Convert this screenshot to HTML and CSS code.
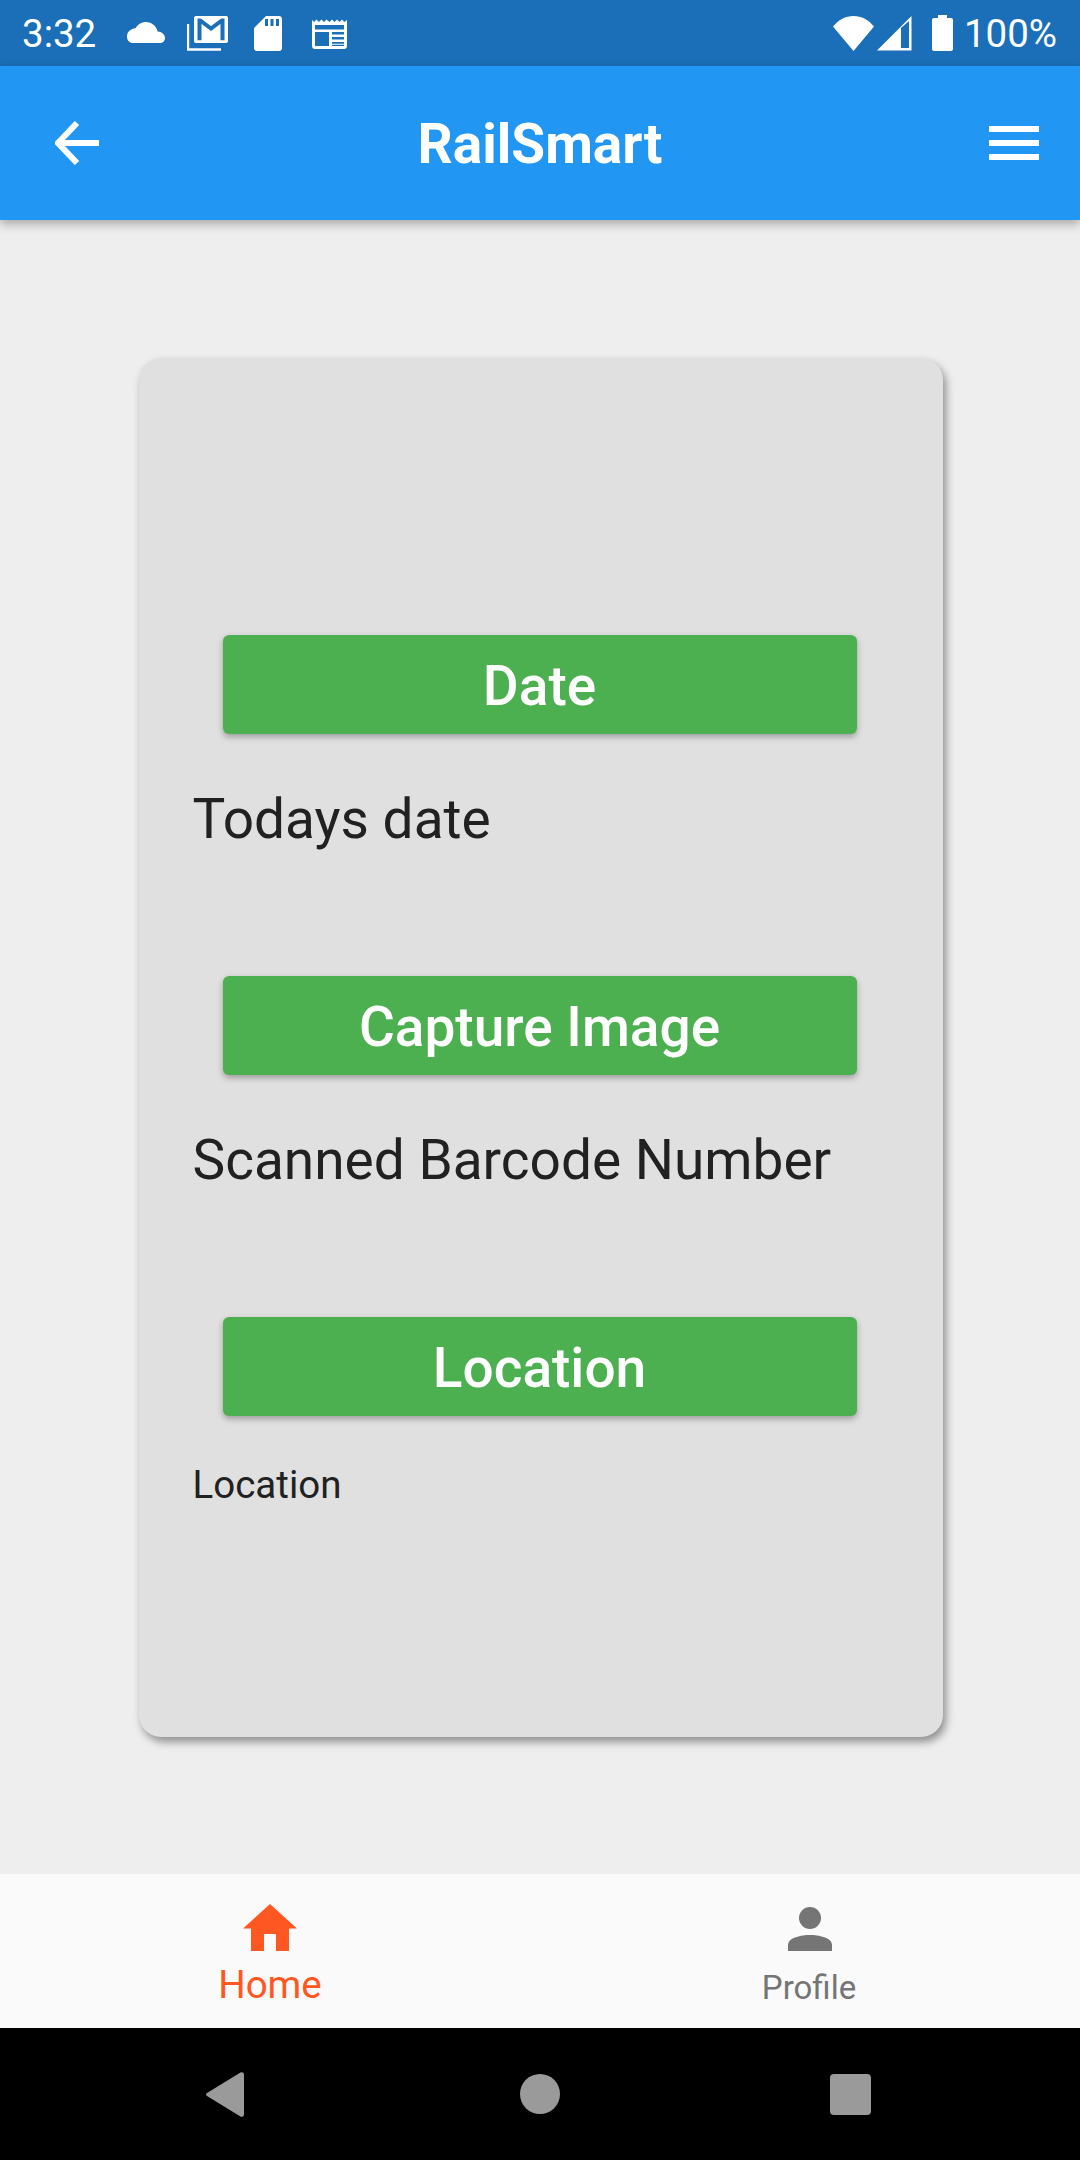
FILE: index.html
```html
<!DOCTYPE html>
<html lang="en">
<head>
<meta charset="UTF-8">
<meta name="viewport" content="width=device-width, initial-scale=1.0">
<title>RailSmart</title>
<link rel="stylesheet" href="styles.css">
</head>
<body>
<div class="screen">
    <div class="status-bar">
        <span class="status-time">3:32</span>
        <svg class="icon-cloud" viewBox="0 0 38 21"><path d="M30.6 9.5C29.5 4 24.6 0 19 0c-4.500 0-8.500 2.500-10.500 6.300C3.700 6.800 0 10 0 14.500 0 18.500 2.500 21 6 21h27c3 0 5-2.200 5-5 0-3.400-3.200-6.300-7.400-6.500z" fill="#fff"/></svg>
        <svg class="icon-mail" viewBox="0 0 41 35">
            <path d="M1 8v25.500h33" fill="none" stroke="#fff" stroke-width="2.400"/>
            <rect x="7" y="0" width="34" height="27" rx="2.500" fill="#fff"/>
            <path d="M12.500 24.500V4l11.500 8.500L35.500 4v20.500" fill="none" stroke="#1a6fb8" stroke-width="4"/>
            <rect x="8.200" y="1.200" width="31.600" height="24.600" rx="1.500" fill="none" stroke="#fff" stroke-width="2.400"/>
        </svg>
        <svg class="icon-sd" viewBox="0 0 28 35"><path d="M12 0h13c1.700 0 3 1.300 3 3v29c0 1.700-1.300 3-3 3H3c-1.700 0-3-1.300-3-3V12zM11 3v7h3V3zm5.500 0v7h3V3zM22 3v7h3V3z" fill="#fff" fill-rule="evenodd"/></svg>
        <svg class="icon-news" viewBox="0 0 35 31">
            <path d="M0 2l2 2 2.500-2.500L7 4l2.500-2.500L12 4l2.500-2.500L17.500 4l2.500-2.500L22.500 4 25 1.500 27.500 4 30 1.500 32.500 4 35 2v26c0 1.700-1.300 3-3 3H3c-1.700 0-3-1.300-3-3z" fill="#fff"/>
            <path d="M3 7h29v4.500H3zM3 14h14v14H3zM20 14h12v2.500H20zM20 19h12v2.500H20zM20 24h12v1.700H20zM20 26.800h12V28H20z" fill="#1a6fb8"/>
        </svg>
        <span class="status-spacer"></span>
        <svg class="icon-wifi" viewBox="0 0 41 35"><path d="M20.500 35L0 10.500C5.500 4 12.500 0 20.500 0S35.500 4 41 10.500z" fill="#fff"/></svg>
        <svg class="icon-signal" viewBox="0 0 35 35">
            <path d="M0 34.500L34.500 0v34.500z" fill="#fff"/>
            <path d="M24 12v20h8V5z" fill="#1a6fb8"/>
        </svg>
        <svg class="icon-battery" viewBox="0 0 21 36"><path d="M6 0h9v3h4c1.100 0 2 .9 2 2v29c0 1.100-.9 2-2 2H2c-1.100 0-2-.9-2-2V5c0-1.100.9-2 2-2h4z" fill="#fff"/></svg>
        <span class="status-battery">100%</span>
    </div>

    <header class="app-bar">
        <svg class="icon-back" viewBox="0 0 44 44"><path d="M44 22H3M22 2L3 22l19 20" fill="none" stroke="#fff" stroke-width="6"/></svg>
        <h1 class="app-title">RailSmart</h1>
        <div class="icon-menu"><span></span><span></span><span></span></div>
    </header>

    <main class="content">
        <div class="card">
            <section class="card-row">
                <button class="action-button" type="button">Date</button>
                <p class="row-text">Todays date</p>
            </section>
            <section class="card-row">
                <button class="action-button" type="button">Capture Image</button>
                <p class="row-text">Scanned Barcode Number</p>
            </section>
            <section class="card-row">
                <button class="action-button" type="button">Location</button>
                <p class="row-text row-text-small">Location</p>
            </section>
        </div>
    </main>

    <nav class="bottom-nav">
        <div class="nav-item nav-item-active">
            <svg class="icon-home" viewBox="0 0 54 47"><path d="M27 0l27 24.500h-8V47H33V30H21v17H8V24.500H0z" fill="#ff5722"/></svg>
            <span class="nav-label">Home</span>
        </div>
        <div class="nav-item">
            <svg class="icon-person" viewBox="0 0 44 44">
                <circle cx="22" cy="11" r="11" fill="#757575"/>
                <path d="M0 44v-6c0-7.500 13.500-10 22-10s22 2.500 22 10v6z" fill="#757575"/>
            </svg>
            <span class="nav-label">Profile</span>
        </div>
    </nav>

    <div class="system-bar">
        <svg class="sys-back" viewBox="0 0 38 45"><path d="M1 21L34.500.5c1.500-.8 3.500 0 3.500 2v40c0 2-2 2.800-3.500 2L1 24c-1.300-.8-1.300-2.200 0-3z" fill="#9a9a9a"/></svg>
        <span class="sys-home"></span>
        <span class="sys-recent"></span>
    </div>
</div>
</body>
</html>
```

FILE: styles.css
```css
* {
    box-sizing: border-box;
}
body {
    margin: 0;
    font-family: Roboto, "Noto Sans", sans-serif;
    background-color: #eeeeee;
}
svg {
    display: block;
    flex: none;
}
.screen {
    width: 1080px;
    height: 2160px;
    display: flex;
    flex-direction: column;
    overflow: hidden;
}

/* status bar */
.status-bar {
    height: 66px;
    background-color: #1a6fb8;
    color: white;
    display: flex;
    align-items: center;
    padding: 0 23px 0 22px;
    font-size: 38.5px;
    flex: none;
}
.status-time {
    width: 105px;
}
.status-spacer {
    flex: 1;
}
.status-battery {
    margin-left: 11px;
}
.icon-cloud {
    width: 38px;
    height: 21px;
    margin-top: -1px;
}
.icon-mail {
    width: 41px;
    height: 35px;
    margin-left: 22px;
}
.icon-sd {
    width: 28px;
    height: 35px;
    margin-left: 26px;
}
.icon-news {
    width: 35px;
    height: 31px;
    margin-left: 30px;
}
.icon-wifi {
    width: 41px;
    height: 35px;
}
.icon-signal {
    width: 35px;
    height: 35px;
    margin-left: 3px;
}
.icon-battery {
    width: 21px;
    height: 36px;
    margin-left: 20px;
}

/* app bar */
.app-bar {
    height: 154px;
    background-color: #2196f3;
    box-shadow: 0 4px 10px rgba(0, 0, 0, 0.3);
    display: grid;
    grid-template-columns: 1fr auto 1fr;
    align-items: center;
    padding: 0 41px 0 55px;
    flex: none;
    z-index: 1;
}
.app-title {
    margin: 2px 14px 0 0;
    color: white;
    font-size: 55px;
    font-weight: 700;
}
.icon-back {
    width: 44px;
    height: 44px;
}
.icon-menu {
    width: 50px;
    justify-self: end;
    display: flex;
    flex-direction: column;
    gap: 8px;
}
.icon-menu span {
    height: 6px;
    background-color: white;
}

/* card */
.content {
    flex: 1;
    display: flex;
    align-items: center;
    justify-content: center;
}
.card {
    width: 804px;
    height: 1379px;
    margin-left: 1px;
    padding-top: 277px;
    background-color: #e0e0e0;
    border-radius: 22px;
    box-shadow: 3px 5px 8px rgba(0, 0, 0, 0.4);
}
.card-row {
    height: 341px;
    display: flex;
    flex-direction: column;
}
.action-button {
    width: 634px;
    height: 99px;
    margin: 0 0 0 84px;
    padding: 3px 0 0;
    border: none;
    border-radius: 6px;
    background-color: #4caf50;
    color: white;
    font-family: inherit;
    font-size: 55px;
    font-weight: 500;
    box-shadow: 0 3px 6px rgba(0, 0, 0, 0.3);
}
.row-text {
    margin: 52px 0 0 54px;
    color: #212121;
    font-size: 55px;
    line-height: 66px;
}
.row-text-small {
    margin-top: 46px;
    font-size: 38.5px;
    line-height: 46px;
}

/* bottom navigation */
.bottom-nav {
    height: 154px;
    background-color: #fafafa;
    display: flex;
    flex: none;
}
.nav-item {
    flex: 1;
    display: flex;
    flex-direction: column;
    align-items: center;
    color: #757575;
    padding-top: 33px;
}
.nav-item-active {
    color: #ff5722;
    padding-top: 30px;
}
.icon-home {
    width: 54px;
    height: 47px;
}
.icon-person {
    width: 44px;
    height: 44px;
}
.nav-label {
    font-size: 33px;
    line-height: 40px;
    margin-top: 17px;
    margin-right: 2px;
}
.nav-item-active .nav-label {
    font-size: 38.5px;
    line-height: 46px;
    margin-top: 11px;
    margin-right: 0;
}

/* android system bar */
.system-bar {
    height: 132px;
    flex: none;
    background-color: black;
    position: relative;
}
.sys-back,
.sys-home,
.sys-recent {
    position: absolute;
}
.sys-back {
    left: 206px;
    top: 44px;
    width: 38px;
    height: 45px;
}
.sys-home {
    left: 520px;
    top: 46px;
    width: 40px;
    height: 40px;
    border-radius: 50%;
    background-color: #9a9a9a;
}
.sys-recent {
    left: 830px;
    top: 46px;
    width: 41px;
    height: 41px;
    border-radius: 4px;
    background-color: #9a9a9a;
}
```
